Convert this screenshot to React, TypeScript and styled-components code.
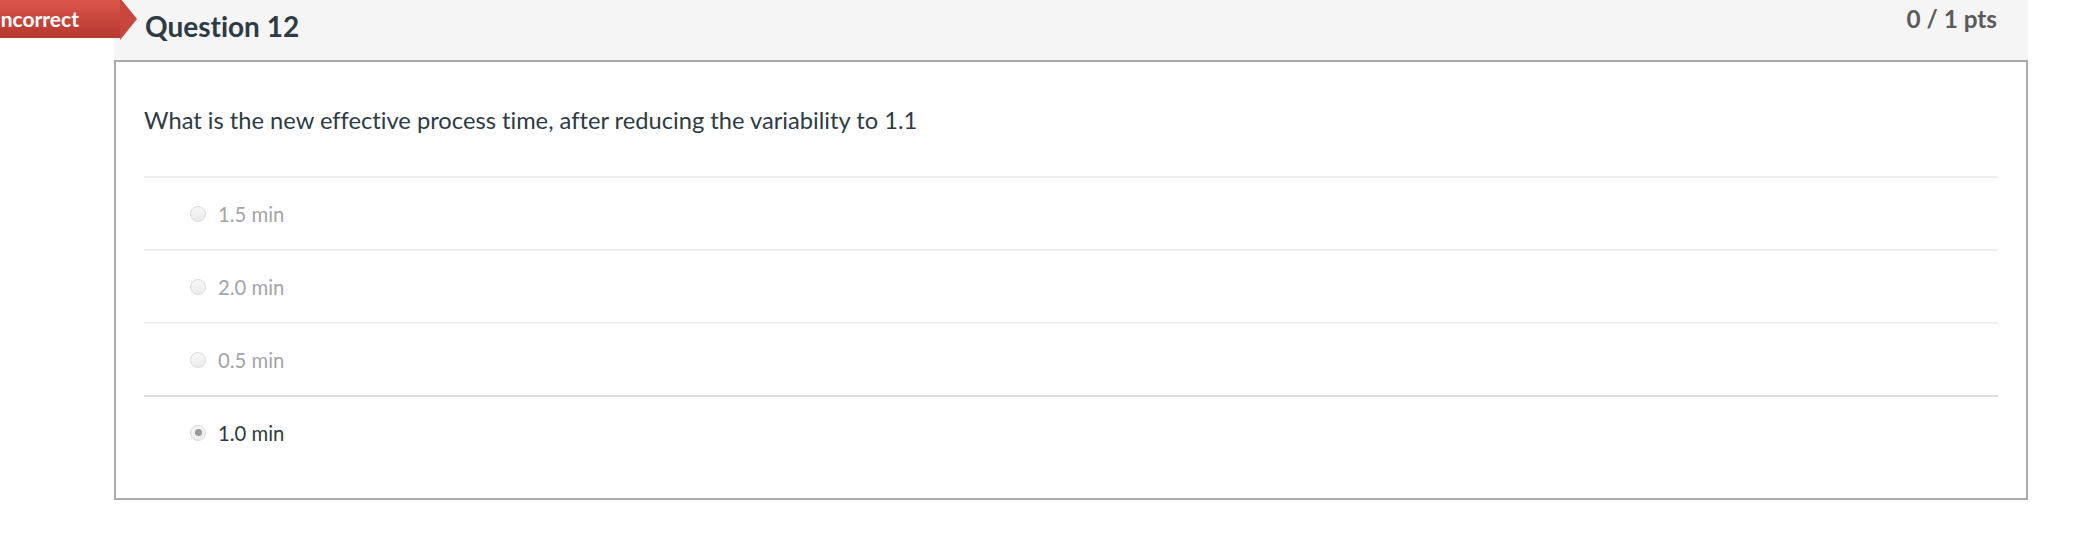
import React from "react";
import styled, { createGlobalStyle } from "styled-components";

const GlobalStyle = createGlobalStyle`
  body {
    margin: 0;
    background: #ffffff;
    font-family: Lato, "Open Sans", "Liberation Sans", sans-serif;
    font-variant-ligatures: none;
    color: #2d3b45;
  }
`;

const answers = [
  { label: "1.5 min", selected: false },
  { label: "2.0 min", selected: false },
  { label: "0.5 min", selected: false },
  { label: "1.0 min", selected: true },
];

function App() {
  return (
    <>
      <GlobalStyle />
      <QuestionBlock>
        <Badge>Incorrect</Badge>
        <Header>
          <Title>Question 12</Title>
          <Points>0 / 1 pts</Points>
        </Header>
        <Body>
          <QuestionText>
            What is the new effective process time, after reducing the
            variability to 1.1
          </QuestionText>
          <AnswerList>
            {answers.map((a) => (
              <AnswerRow key={a.label} $selected={a.selected}>
                <Radio $checked={a.selected} />
                <AnswerLabel $selected={a.selected}>{a.label}</AnswerLabel>
              </AnswerRow>
            ))}
          </AnswerList>
        </Body>
      </QuestionBlock>
    </>
  );
}

const QuestionBlock = styled.div`
  position: relative;
  margin-left: 114px;
  width: 1914px;
`;

// the "Incorrect" flag hangs off the left edge of the page
const Badge = styled.div`
  position: absolute;
  z-index: 1;
  top: -2px;
  left: -114px;
  width: 120px;
  height: 40px;
  padding-right: 41px;
  box-sizing: border-box;
  display: flex;
  align-items: center;
  justify-content: flex-end;
  white-space: nowrap;
  color: #ffffff;
  font-weight: 700;
  font-size: 21px;
  background: linear-gradient(#dd564c, #b5372e);
  border-top: 1px solid #e87a72;

  &::after {
    content: "";
    position: absolute;
    right: -17px;
    top: -1px;
    border-top: 21px solid transparent;
    border-bottom: 21px solid transparent;
    border-left: 17px solid #c9463d;
  }
`;

const Header = styled.div`
  display: flex;
  justify-content: space-between;
  align-items: flex-start;
  height: 60px;
  padding: 0 31px;
  background: #f5f5f5;
`;

const Title = styled.h2`
  margin: 10px 0 0;
  font-size: 28px;
  line-height: 32px;
  font-weight: 700;
  color: #2d3b45;
`;

const Points = styled.div`
  margin-top: 4px;
  font-size: 24.3px;
  line-height: 29px;
  font-weight: 700;
  color: #5b5b5b;
`;

const Body = styled.div`
  border: 2px solid #aaaaaa;
  padding: 42px 28px 30px 28px;
`;

const QuestionText = styled.p`
  margin: 0 0 40px;
  font-size: 23.7px;
  line-height: 32px;
  color: #2d3b45;
`;

const AnswerList = styled.div`
  display: flex;
  flex-direction: column;
`;

const AnswerRow = styled.div<{ $selected: boolean }>`
  display: flex;
  align-items: center;
  gap: 12px;
  height: 71px;
  padding-left: 46px;
  border-top: 2px solid ${(p) => (p.$selected ? "#dddddd" : "#eeeeee")};
`;

const Radio = styled.span<{ $checked: boolean }>`
  position: relative;
  width: 14px;
  height: 14px;
  border-radius: 50%;
  border: 1px solid #dadada;
  background: linear-gradient(#f7f7f7, #ececec);

  &::after {
    content: "";
    display: ${(p) => (p.$checked ? "block" : "none")};
    position: absolute;
    left: 3.5px;
    top: 3.5px;
    width: 7px;
    height: 7px;
    border-radius: 50%;
    background: #9a9a9a;
  }
`;

const AnswerLabel = styled.span<{ $selected: boolean }>`
  font-size: 20.3px;
  color: ${(p) => (p.$selected ? "#2d3b45" : "#a3a5a8")};
`;

export default App;
